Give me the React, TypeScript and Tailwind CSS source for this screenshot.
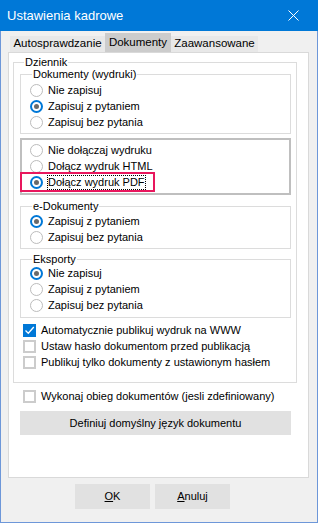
import React from "react";

const BLUE = "#0078d7";

function RadioDot({ checked }: { checked?: boolean }) {
  if (checked) {
    return (
      <span className="flex h-[13px] w-[13px] shrink-0 items-center justify-center rounded-full border-2 border-[#0078d7] bg-white">
        <span className="h-[5px] w-[5px] rounded-full bg-[#6a6a6a]" />
      </span>
    );
  }
  return <span className="h-[13px] w-[13px] shrink-0 rounded-full border border-[#bcbcbc] bg-white" />;
}

function Radio({ label, checked, focus, pl = "pl-[9px]" }: { label: string; checked?: boolean; focus?: boolean; pl?: string }) {
  return (
    <div className={`relative flex h-4 items-center ${pl}`}>
      <RadioDot checked={checked} />
      {focus ? (
        <span className="ml-[4px] h-[15px] border border-dotted border-black leading-[13px]">{label}</span>
      ) : (
        <span className="ml-[5px] leading-4">{label}</span>
      )}
    </div>
  );
}

function Check({ label, checked }: { label: string; checked?: boolean }) {
  return (
    <div className="flex h-4 items-center">
      {checked ? (
        <span className="flex h-[13px] w-[13px] shrink-0 items-center justify-center bg-[#0078d7]">
          <svg width="11" height="11" viewBox="0 0 11 11">
            <path d="M1.5 5.5 L4.3 8.3 L9.8 2" fill="none" stroke="white" strokeWidth="1.3" />
          </svg>
        </span>
      ) : (
        <span className="h-[13px] w-[13px] shrink-0 border-2 border-[#cccccc] bg-white" />
      )}
      <span className="ml-[5px] leading-4">{label}</span>
    </div>
  );
}

function Group({ label, left, className, children }: { label: string; left: string; className: string; children: React.ReactNode }) {
  return (
    <div className={`relative border border-[#dcdcdc] ${className}`}>
      <span className={`absolute top-[-7px] h-[13px] bg-white px-[1px] leading-[13px] ${left}`}>{label}</span>
      {children}
    </div>
  );
}

export default function App() {
  return (
    <div className="flex h-[523px] w-[318px] flex-col bg-[#f0f0f0] font-['Liberation_Sans',Arial,sans-serif] text-[11px] text-black">
      {/* title bar */}
      <div className="flex h-[31px] shrink-0 items-center justify-between pl-[7px] pr-[19px] text-white" style={{ background: BLUE }}>
        <span className="text-[13px]">Ustawienia kadrowe</span>
        <svg width="11" height="11" viewBox="0 0 11 11">
          <path d="M0.5 0.5 L10.5 10.5 M10.5 0.5 L0.5 10.5" stroke="white" strokeWidth="1" />
        </svg>
      </div>

      <div className="flex flex-1 flex-col border-x border-b border-[#6d97d9]">
        {/* tabs */}
        <div className="mt-[2px] flex h-[19px] items-end pl-[9px] text-[11.5px]">
          <div className="flex h-4 w-[95px] items-center justify-center bg-[#e8e8e8]">Autosprawdzanie</div>
          <div className="flex h-[19px] w-[66px] items-center justify-center bg-[#cccccc]">Dokumenty</div>
          <div className="flex h-4 w-[87px] items-center justify-center bg-[#e8e8e8]">Zaawansowane</div>
        </div>

        {/* tab panel */}
        <div className="ml-[7px] flex h-[426px] w-[301px] flex-col border border-[#d9d9d9] bg-white">
          <Group label="Dziennik" left="left-[10px]" className="ml-[4px] mt-[9px] w-[284px] pb-[12px]">
            <Group label="Dokumenty (wydruki)" left="left-[11px]" className="ml-[6px] mt-[11px] w-[271px] pb-[3px] pt-[7px]">
              <Radio label="Nie zapisuj" />
              <Radio label="Zapisuj z pytaniem" checked />
              <Radio label="Zapisuj bez pytania" />
            </Group>

            <div className="relative ml-[6px] mt-[4px] w-[271px] border-2 border-[#bfbfbf] pb-[3px] pt-[2px]">
              <Radio label="Nie dołączaj wydruku" pl="pl-[8px]" />
              <Radio label="Dołącz wydruk HTML" pl="pl-[8px]" />
              <div className="relative">
                <Radio label="Dołącz wydruk PDF" checked focus pl="pl-[8px]" />
                <span className="absolute left-[-2px] top-[-2px] h-[20px] w-[135px] border-2 border-[#e8175d]" />
              </div>
            </div>

            <Group label="e-Dokumenty" left="left-[11px]" className="ml-[6px] mt-[11px] w-[271px] pb-[3px] pt-[6px]">
              <Radio label="Zapisuj z pytaniem" checked />
              <Radio label="Zapisuj bez pytania" />
            </Group>

            <Group label="Eksporty" left="left-[11px]" className="ml-[6px] mt-[10px] w-[271px] pb-[4px] pt-[5px]">
              <Radio label="Nie zapisuj" checked />
              <Radio label="Zapisuj z pytaniem" />
              <Radio label="Zapisuj bez pytania" />
            </Group>

            <div className="mt-[4px] pl-[9px]">
              <Check label="Automatycznie publikuj wydruk na WWW" checked />
              <Check label="Ustaw hasło dokumentom przed publikacją" />
              <Check label="Publikuj tylko dokumenty z ustawionym hasłem" />
            </div>
          </Group>

          <div className="ml-[14px] mt-[5px]">
            <Check label="Wykonaj obieg dokumentów (jesli zdefiniowany)" />
          </div>

          <div className="ml-[11px] mt-[7px] flex h-[24px] w-[271px] items-center justify-center bg-[#e1e1e1]">
            Definiuj domyślny język dokumentu
          </div>
        </div>

        {/* buttons */}
        <div className="ml-[74px] mt-[6px] flex gap-[5px]">
          <div className="flex h-[25px] w-[75px] items-center justify-center bg-[#e1e1e1]">
            <span><u>O</u>K</span>
          </div>
          <div className="flex h-[25px] w-[75px] items-center justify-center bg-[#e1e1e1]">
            <span><u>A</u>nuluj</span>
          </div>
        </div>
      </div>
    </div>
  );
}
